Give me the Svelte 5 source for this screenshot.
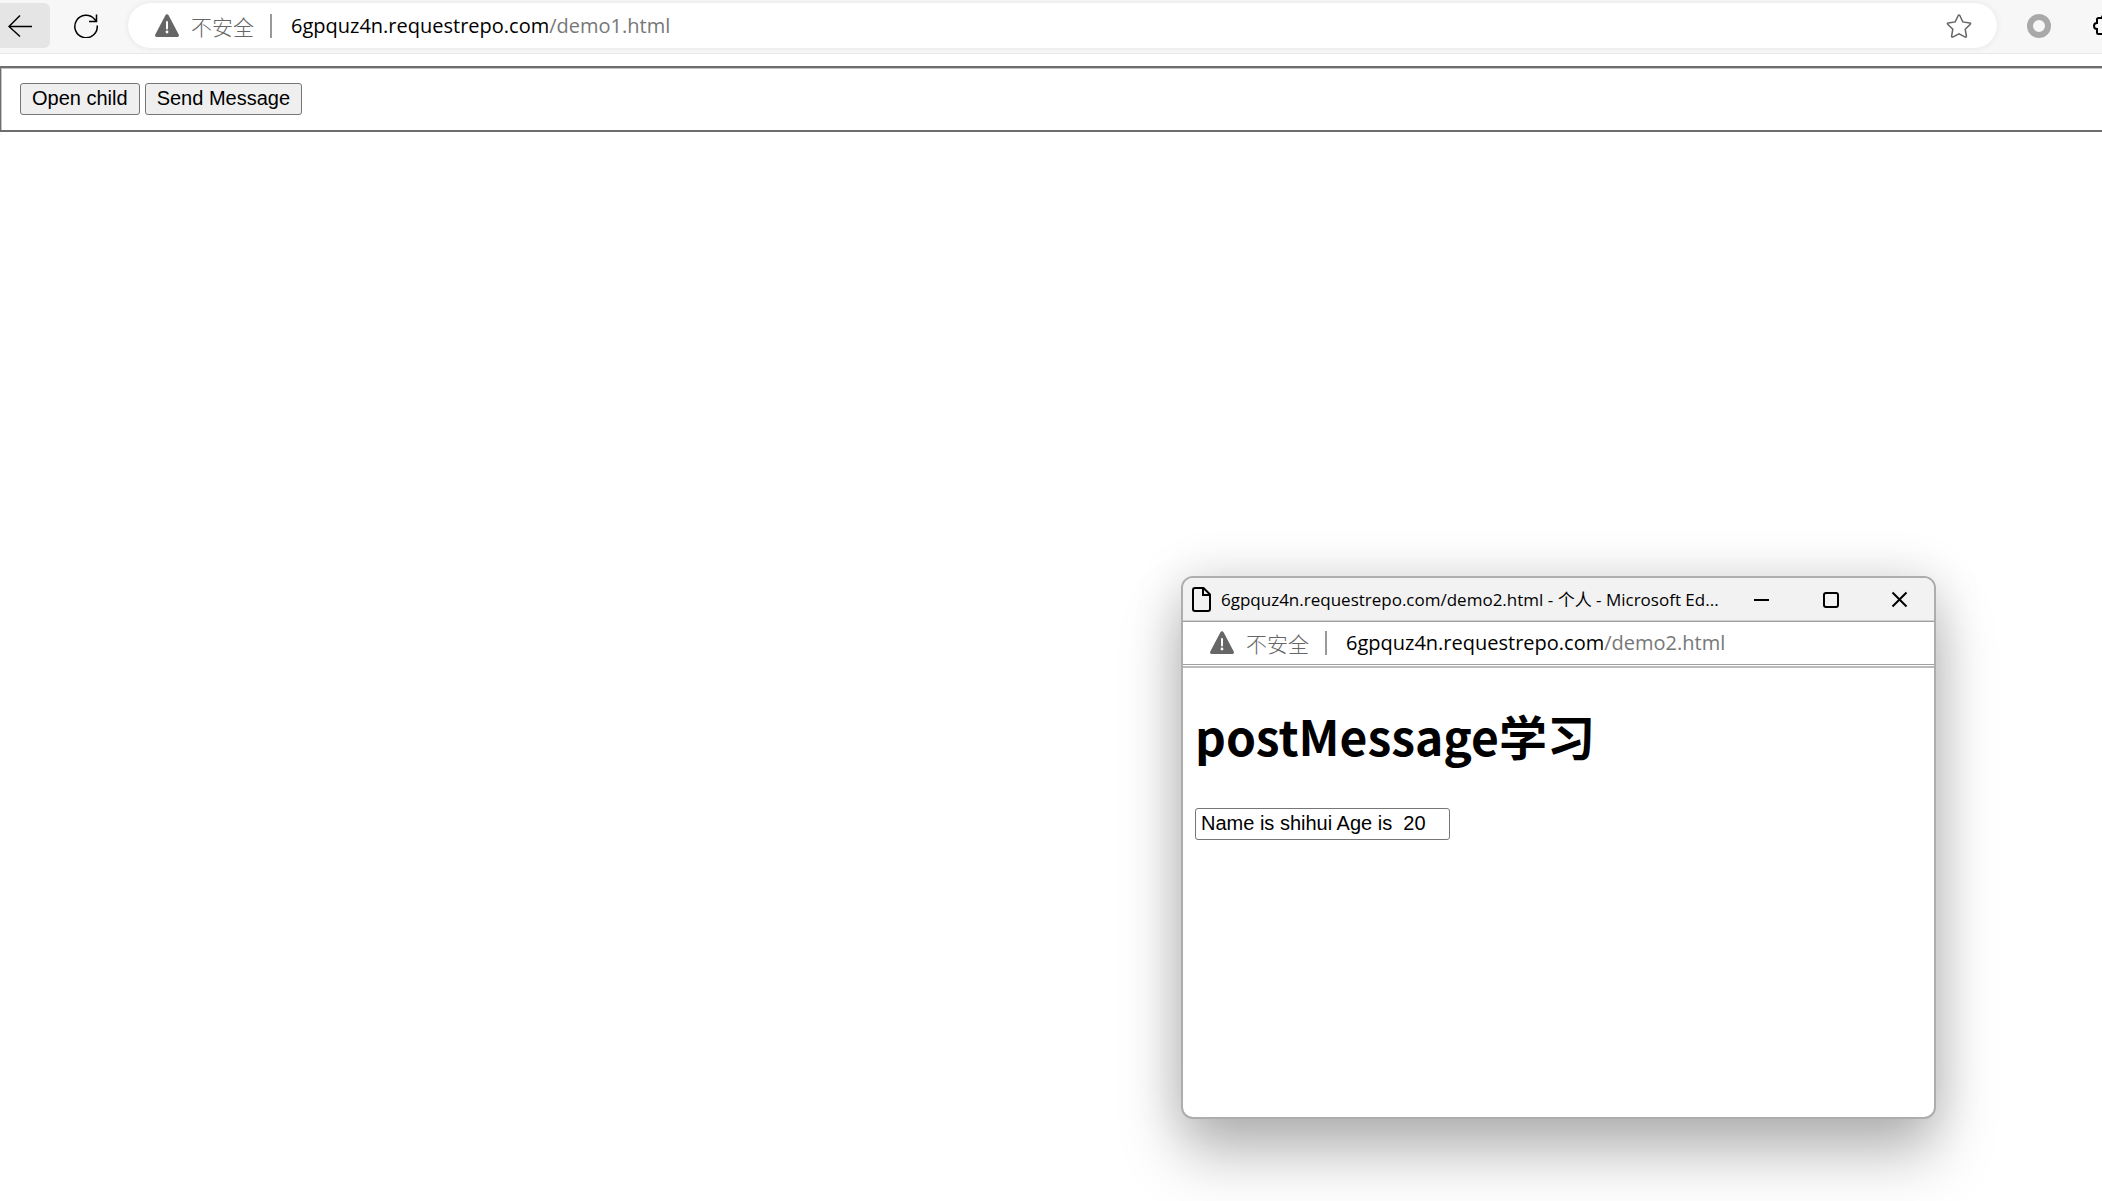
<script>
  const host = "6gpquz4n.requestrepo.com";

  let message = "Name is shihui Age is  20";
</script>

{#snippet siteInfo(path)}
  <svg class="warning" viewBox="0 0 24 24" aria-hidden="true">
    <path d="M10.4 1.3a1.8 1.8 0 0 1 3.2 0L23.7 20.600a1.600 1.600 0 0 1-1.400 2.400H1.700a1.600 1.600 0 0 1-1.400-2.400z" fill="#666" />
    <path d="M12 8v6.500" stroke="#fff" stroke-width="2" stroke-linecap="round" />
    <circle cx="12" cy="18" r="1.400" fill="#fff" />
  </svg>
  <span class="insecure">不安全</span>
  <span class="divider"></span>
  <span class="url">{host}<span class="path">/{path}</span></span>
{/snippet}

<div class="browser">
  <header class="toolbar">
    <button class="icon-btn back" aria-label="Back">
      <svg width="24" height="24" viewBox="0 0 24 24">
        <path d="M24 12.500H1M12 1.500L1 12.500L12 22.500" />
      </svg>
    </button>
    <button class="icon-btn reload" aria-label="Reload">
      <svg width="24" height="24" viewBox="0 0 24 24">
        <path d="M23.200 11.500A11.200 11.200 0 1 1 20.600 5.300L22.500 7.500M22.500 .5V7.500H15" />
      </svg>
    </button>
    <div class="address">
      {@render siteInfo("demo1.html")}
      <button class="star" aria-label="Favorite">
        <svg width="26" height="24" viewBox="0 0 26 24">
          <path d="M12.200 1.500q.8-1.200 1.600 0l3 6.400 7 1q1.300.3.500 1.300l-5.100 5 1.200 6.900q.1 1.300-1.100 1L13 19.800l-6.300 3.300q-1.200.3-1.100-1L6.800 15.200l-5.100-5q-.8-1 .5-1.300l7-1z" />
        </svg>
      </button>
    </div>
    <span class="ring"></span>
    <button class="icon-btn extensions" aria-label="Extensions">
      <svg width="24" height="24" viewBox="0 0 24 24">
        <path d="M4 9V5.500Q4 4 5.500 4H9a3 3 0 0 1 6 0h4v16H5.500Q4 20 4 18.500V15a3 3 0 0 1 0-6z" />
      </svg>
    </button>
  </header>

  <main class="page">
    <button>Open child</button>
    <button>Send Message</button>
  </main>
</div>

<section class="popup">
  <div class="titlebar">
    <svg class="file" width="19" height="25" viewBox="0 0 19 25">
      <path d="M3 1H11.500L18 7.500V22Q18 24 16 24H3Q1 24 1 22V3Q1 1 3 1zM11 1V8H18" />
    </svg>
    <span class="title">{host}/demo2.html - 个人 - Microsoft Ed...</span>
    <button aria-label="Minimize">
      <svg width="17" height="17" viewBox="0 0 17 17"><path d="M1 9H16" /></svg>
    </button>
    <button aria-label="Maximize">
      <svg width="17" height="17" viewBox="0 0 17 17"><rect x="2" y="2" width="14" height="14" rx="2" /></svg>
    </button>
    <button aria-label="Close">
      <svg width="17" height="17" viewBox="0 0 17 17"><path d="M1.500 1.500L15.500 15.500M15.500 1.500L1.500 15.500" /></svg>
    </button>
  </div>
  <div class="location">
    {@render siteInfo("demo2.html")}
  </div>
  <div class="content">
    <h1>postMessage学习</h1>
    <input type="text" aria-label="Message" bind:value={message} />
  </div>
</section>

<style>
  :global(body) {
    margin: 0;
    background: #fff;
    overflow: hidden;
  }

  button {
    font-family: "Liberation Sans", Arial, sans-serif;
    cursor: pointer;
  }

  svg {
    display: block;
    flex: none;
    fill: none;
    stroke: #000;
    stroke-width: 1.5;
  }

  .toolbar {
    display: flex;
    align-items: center;
    height: 54px;
    overflow: hidden;
    box-sizing: border-box;
    padding-bottom: 2px;
    background: #f7f7f7;
    border-bottom: 1px solid #e9e9e9;
    font-family: "Open Sans", "Noto Sans CJK SC", sans-serif;
  }

  .icon-btn {
    display: flex;
    flex: none;
    align-items: center;
    padding: 0;
    border: none;
    background: none;
  }

  .back {
    width: 50px;
    height: 45px;
    padding-left: 8px;
    border-radius: 0 6px 6px 0;
    background: #e5e5e5;
  }

  .reload {
    margin: 0 30px 0 24px;
  }

  .address {
    display: flex;
    flex: 1;
    align-items: center;
    height: 45px;
    box-sizing: border-box;
    padding: 0 25px 0 27px;
    border-radius: 23px;
    background: #fff;
    box-shadow: 0 0 6px rgba(0, 0, 0, 0.08);
  }

  .warning {
    width: 24px;
    height: 24px;
    stroke: none;
  }

  .insecure {
    margin-left: 12px;
    color: #666;
    font-family: "Noto Sans CJK SC", sans-serif;
    font-size: 21px;
    font-weight: 300;
    line-height: 28px;
  }

  .divider {
    width: 2px;
    height: 24px;
    margin: 0 19px 0 16px;
    background: #999;
  }

  .url {
    flex: 1;
    color: #000;
    font-size: 20px;
    line-height: 30px;
    white-space: nowrap;
  }

  .path {
    color: #777;
  }

  .star {
    padding: 0;
    border: none;
    background: none;
  }

  .star svg {
    stroke: #666;
  }

  .ring {
    width: 24px;
    height: 24px;
    margin: 0 42px 0 30px;
    box-sizing: border-box;
    border: 6px solid #a9a9a9;
    border-radius: 50%;
  }

  .extensions {
    width: 9px;
    overflow: hidden;
  }

  .extensions svg {
    stroke-width: 2;
  }

  .page {
    display: flex;
    gap: 5px;
    margin-top: 12px;
    padding: 15px 19px;
    border: 2px solid #6e6e6e;
    border-left-width: 1px;
    border-right: none;
    box-shadow: 0 1px #c4c4c4, inset 1px 1px #c4c4c4;
  }

  .page button,
  .content input {
    height: 32px;
    box-sizing: border-box;
    border: 1px solid #767676;
    border-radius: 3px;
    color: #000;
    font-size: 20px;
  }

  .page button {
    padding: 0 11px 2px;
    background: #efefef;
  }

  .popup {
    position: absolute;
    top: 576px;
    right: 166px;
    display: flex;
    flex-direction: column;
    width: 755px;
    height: 543px;
    box-sizing: border-box;
    overflow: hidden;
    border: 2px solid #adadad;
    border-radius: 12px;
    background: #fff;
    box-shadow: 0 36px 60px rgba(0, 0, 0, 0.26), 0 0 50px rgba(0, 0, 0, 0.14);
    font-family: "Open Sans", "Noto Sans CJK SC", sans-serif;
  }

  .titlebar {
    display: flex;
    align-items: center;
    height: 44px;
    box-sizing: border-box;
    background: #f2f2f2;
    border-bottom: 1px solid #a0a0a0;
    box-shadow: inset 0 -1px #d0d0d0;
  }

  .file {
    margin: 0 10px 0 9px;
    stroke-width: 2;
  }

  .title {
    flex: 1;
    font-size: 17px;
    line-height: 24px;
    white-space: nowrap;
  }

  .titlebar button {
    display: flex;
    flex: none;
    align-items: center;
    justify-content: center;
    width: 69px;
    height: 42px;
    padding: 0;
    border: none;
    background: none;
  }

  .titlebar button svg {
    stroke-width: 2;
  }

  .location {
    display: flex;
    align-items: center;
    height: 43px;
    box-sizing: border-box;
    margin-bottom: 1px;
    padding: 0 27px;
    border-bottom: 1px solid #a0a0a0;
  }

  .content {
    padding: 0 12px;
    border-top: 2px solid #bbb;
  }

  h1 {
    margin: 31px 0 37px;
    font-family: "Noto Sans CJK SC", sans-serif;
    font-size: 48px;
    font-weight: bold;
    line-height: 72px;
  }

  .content input {
    display: block;
    width: 255px;
    padding: 0 5px 2px;
    font-family: "Liberation Sans", Arial, sans-serif;
  }
</style>
